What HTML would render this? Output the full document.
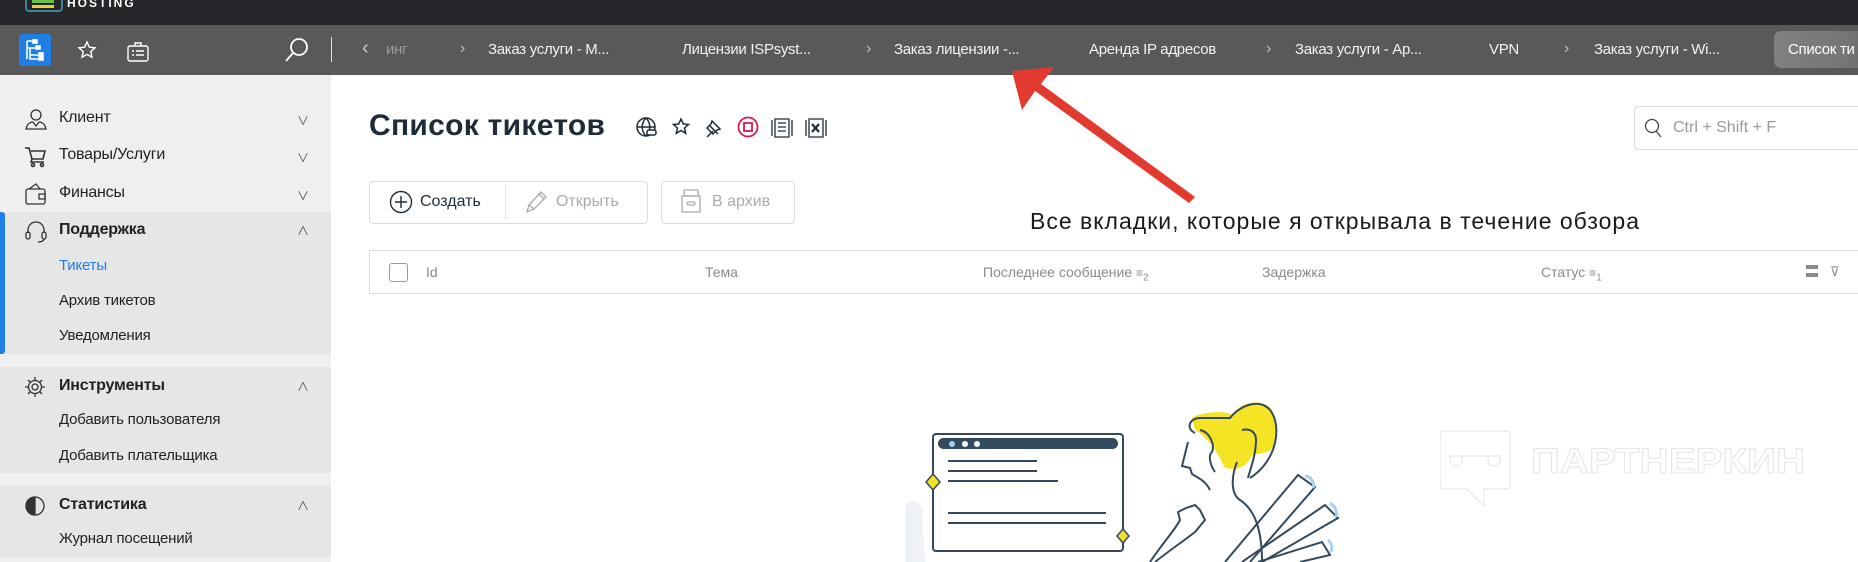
<!DOCTYPE html>
<html><head><meta charset="utf-8"><style>
*{box-sizing:border-box;margin:0;padding:0}
body{width:1858px;height:562px;overflow:hidden;background:#fff;font-family:"Liberation Sans","Noto Sans CJK SC",sans-serif;position:relative;color:#1d2b3a}
.abs{position:absolute}
#top{left:0;top:0;width:1858px;height:25px;background:#26272b}
#tabs{left:0;top:25px;width:1858px;height:50px;background:#595959}
.tab{position:absolute;top:41px;color:#f2f2f2;font-size:15px;white-space:nowrap;letter-spacing:-0.3px}
.chev{position:absolute;top:40px;color:#bdbdbd;font-size:16px}
#side{left:0;top:75px;width:331px;height:487px;background:#efefef}
.grp{position:absolute;left:0;width:331px;background:#e6e6e6}
.si{position:absolute;left:59px;font-size:16px;color:#222;white-space:nowrap;letter-spacing:-0.2px}
.car{position:absolute;left:297px;color:#555;font-size:12px}
.btn{position:absolute;border:1px solid #dcdcdc;border-radius:4px;background:#fff}
.th{position:absolute;top:264px;font-size:14px;color:#8a8a8a;white-space:nowrap}
</style></head><body>
<div id="top" class="abs"></div>
<svg class="abs" style="left:25px;top:0" width="40" height="13"><rect x="1" y="-6" width="36" height="17" rx="3" fill="none" stroke="#4aa4b8" stroke-width="1.5"/><rect x="7" y="-2" width="22" height="5" fill="#6cc04a"/><rect x="7" y="5" width="22" height="3" fill="#e8d23a"/></svg>
<div class="abs" style="left:67px;top:-4px;color:#fff;font-weight:bold;font-size:12px;letter-spacing:2px">HOSTING</div>
<div id="tabs" class="abs"></div>
<div class="abs" style="left:19px;top:34px;width:32px;height:32px;background:#1f7fe5;border-radius:3px"></div>
<svg class="abs" style="left:19px;top:34px" width="32" height="32" fill="none" stroke="#fff" stroke-width="1.6"><path d="M8 7h6M8 7v18M8 14h8M11 14v7h8M11 21v4h8"/><rect x="14" y="6" width="4" height="3" fill="#fff"/><rect x="17" y="12" width="4" height="3" fill="#fff"/><rect x="20" y="19" width="4" height="3" fill="#fff"/><rect x="20" y="23" width="4" height="3" fill="#fff"/></svg>
<svg class="abs" style="left:77px;top:40px" width="20" height="20" fill="none" stroke="#fff" stroke-width="1.4"><path d="M10 2l2.4 5.2 5.6.6-4.2 3.8 1.2 5.6L10 14.4 5 17.2l1.2-5.6L2 7.8l5.6-.6z"/></svg>
<svg class="abs" style="left:127px;top:40px" width="22" height="22" fill="none" stroke="#fff" stroke-width="1.4"><rect x="1" y="6" width="20" height="15" rx="2"/><path d="M8 6V3h6v3M5 11h2M9 11h8M5 15h2M9 15h8"/></svg>
<svg class="abs" style="left:284px;top:37px" width="26" height="26" fill="none" stroke="#fff" stroke-width="1.8"><circle cx="15" cy="10" r="8"/><path d="M9 16L2 24"/></svg>
<div class="abs" style="left:331px;top:37px;width:1px;height:25px;background:#ddd"></div>
<div class="chev" style="left:362px;color:#ccc;font-size:20px;top:37px">‹</div>
<div class="tab" style="left:386px;color:#9a9a9a">инг</div>
<div class="chev" style="left:460px">›</div>
<div class="tab" style="left:488px">Заказ услуги - М...</div>
<div class="tab" style="left:682px">Лицензии ISPsyst...</div>
<div class="chev" style="left:866px">›</div>
<div class="tab" style="left:894px">Заказ лицензии -...</div>
<div class="tab" style="left:1089px">Аренда IP адресов</div>
<div class="chev" style="left:1266px">›</div>
<div class="tab" style="left:1295px">Заказ услуги - Ар...</div>
<div class="tab" style="left:1489px">VPN</div>
<div class="chev" style="left:1564px">›</div>
<div class="tab" style="left:1594px">Заказ услуги - Wi...</div>
<div class="abs" style="left:1774px;top:31px;width:100px;height:37px;border-radius:7px;background:linear-gradient(90deg,#808080,#767676 70%,#6a6a6a)"></div>
<div class="tab" style="left:1788px;color:#fff">Список ти</div>

<div id="side" class="abs"></div>
<div class="grp" style="top:212px;height:142px"></div>
<div class="abs" style="left:0;top:212px;width:5px;height:142px;background:#1f7fe5;border-radius:0 3px 3px 0"></div>
<div class="grp" style="top:367px;height:106px"></div>
<div class="grp" style="top:486px;height:71px"></div>
<svg class="abs" style="left:24px;top:107px" width="24" height="24" fill="none" stroke="#333" stroke-width="1.3"><circle cx="12" cy="8" r="5"/><path d="M2 22c1-5 4-7 7-7l3 4 3-4c3 0 6 2 7 7z"/></svg>
<svg class="abs" style="left:24px;top:145px" width="24" height="24" fill="none" stroke="#333" stroke-width="1.6"><path d="M1 3h4l3 11h11l2-8H7M8 14l-1 3h13"/><circle cx="9" cy="20" r="1.5"/><circle cx="18" cy="20" r="1.5"/></svg>
<svg class="abs" style="left:24px;top:182px" width="24" height="24" fill="none" stroke="#333" stroke-width="1.3"><rect x="2" y="7" width="19" height="15" rx="2"/><path d="M5 7l7-5 4 5M15 12h6v5h-6z"/></svg>
<svg class="abs" style="left:24px;top:219px" width="24" height="24" fill="none" stroke="#333" stroke-width="1.3"><path d="M4 14v-3a8 8 0 0 1 16 0v3"/><rect x="2" y="13" width="4" height="7" rx="2"/><rect x="18" y="13" width="4" height="7" rx="2"/><path d="M20 20c0 2-3 3-6 3"/></svg>
<svg class="abs" style="left:24px;top:376px" width="22" height="22" fill="none" stroke="#333" stroke-width="1.3"><circle cx="11" cy="11" r="3"/><path d="M11 1v3M11 18v3M1 11h3M18 11h3M4 4l2 2M16 16l2 2M4 18l2-2M16 6l2-2"/><circle cx="11" cy="11" r="6.5"/></svg>
<svg class="abs" style="left:24px;top:494px" width="22" height="24" fill="none" stroke="#333" stroke-width="1.3"><circle cx="11" cy="12" r="9"/><path d="M11 3a9 9 0 0 0 0 18z" fill="#333"/></svg>
<div class="si" style="top:109px">Клиент</div><div class="car" style="top:112px">∨</div>
<div class="si" style="top:146px">Товары/Услуги</div><div class="car" style="top:149px">∨</div>
<div class="si" style="top:184px">Финансы</div><div class="car" style="top:187px">∨</div>
<div class="si" style="top:221px;font-weight:bold">Поддержка</div><div class="car" style="top:222px">∧</div>
<div class="si" style="top:257px;color:#1f7fe5;font-size:15px">Тикеты</div>
<div class="si" style="top:292px;font-size:15px">Архив тикетов</div>
<div class="si" style="top:327px;font-size:15px">Уведомления</div>
<div class="si" style="top:377px;font-weight:bold">Инструменты</div><div class="car" style="top:378px">∧</div>
<div class="si" style="top:411px;font-size:15px">Добавить пользователя</div>
<div class="si" style="top:447px;font-size:15px">Добавить плательщика</div>
<div class="si" style="top:496px;font-weight:bold">Статистика</div><div class="car" style="top:497px">∧</div>
<div class="si" style="top:530px;font-size:15px">Журнал посещений</div>

<div class="abs" style="left:369px;top:109px;font-size:30px;font-weight:bold;color:#1d2b3a;letter-spacing:0.3px">Список тикетов</div>
<svg class="abs" style="left:635px;top:116px" width="200" height="24" fill="none" stroke="#1d2b3a" stroke-width="1.5">
<circle cx="11" cy="11" r="9"/><path d="M2 11h18M11 2c-5 5-5 13 0 18M11 2c5 5 5 13 0 18"/><rect x="12" y="14" width="9" height="5" rx="2" fill="#fff"/>
<path d="M46 3l2.3 5 5.2.5-4 3.6 1.2 5.2-4.7-2.8-4.7 2.8 1.2-5.2-4-3.6 5.2-.5z"/>
<path d="M72 21l6-6M75 10l8 8M77 5l8 8-3 1-4 4-6-6 4-4z"/>
<circle cx="113" cy="11" r="9.5" stroke="#d81b50" stroke-width="1.8"/><rect x="109" y="7" width="8" height="8" stroke="#d81b50" stroke-width="1.8"/>
<path d="M140 3h14v18h-14zM137 4v16M157 4v16M143 7h8M143 11h8M143 15h8" stroke-width="1.3"/>
<path d="M174 3h14v18h-14zM171 4v16M191 4v16" stroke-width="1.3"/><path d="M177 8l7 8M184 8l-7 8" stroke-width="2.2"/>
</svg>
<div class="abs" style="left:1634px;top:106px;width:240px;height:44px;border:1px solid #ddd;border-radius:4px"></div>
<svg class="abs" style="left:1643px;top:117px" width="20" height="22" fill="none" stroke="#444" stroke-width="1.3"><circle cx="9" cy="9" r="6.5"/><path d="M13 14l5 6"/></svg>
<div class="abs" style="left:1673px;top:119px;font-size:16px;color:#999">Ctrl + Shift + F</div>

<div class="btn" style="left:369px;top:181px;width:279px;height:43px"></div>
<div class="abs" style="left:505px;top:185px;width:1px;height:35px;background:#e2e2e2"></div>
<svg class="abs" style="left:389px;top:190px" width="24" height="24" fill="none" stroke="#1d2b3a" stroke-width="1.4"><circle cx="12" cy="12" r="10.5"/><path d="M12 6v12M6 12h12"/></svg>
<div class="abs" style="left:420px;top:193px;font-size:16px;color:#1d2b3a">Создать</div>
<svg class="abs" style="left:524px;top:189px" width="24" height="26" fill="none" stroke="#aaa" stroke-width="1.3"><path d="M3 23l2-7L17 3l5 5L10 20zM5 16l5 4M15 5l5 5"/></svg>
<div class="abs" style="left:556px;top:193px;font-size:16px;color:#aaa">Открыть</div>
<div class="btn" style="left:661px;top:181px;width:134px;height:43px"></div>
<svg class="abs" style="left:680px;top:189px" width="22" height="26" fill="none" stroke="#aaa" stroke-width="1.3"><rect x="4" y="1" width="14" height="6" rx="1"/><path d="M2 7h18v16H2z"/><rect x="7" y="13" width="8" height="3" rx="1.5"/></svg>
<div class="abs" style="left:712px;top:193px;font-size:16px;color:#aaa">В архив</div>

<div class="abs" style="left:369px;top:250px;width:1500px;height:44px;border:1px solid #dcdcdc;border-right:none"></div>
<div class="abs" style="left:389px;top:263px;width:19px;height:19px;border:1.5px solid #999;border-radius:3px"></div>
<div class="th" style="left:426px">Id</div>
<div class="th" style="left:705px">Тема</div>
<div class="th" style="left:983px">Последнее сообщение <span style="font-size:12px">≡<sub>2</sub></span></div>
<div class="th" style="left:1262px">Задержка</div>
<div class="th" style="left:1541px">Статус <span style="font-size:12px">≡<sub>1</sub></span></div>
<div class="abs" style="left:1806px;top:265px;width:12px;height:4px;background:#888"></div>
<div class="abs" style="left:1806px;top:273px;width:12px;height:4px;background:#888"></div>
<div class="th" style="left:1830px;font-size:13px">⊽</div>

<div class="abs" style="left:1030px;top:208px;font-size:23px;letter-spacing:1px;color:#1a1a1a;white-space:nowrap">Все вкладки, которые я открывала в течение обзора</div>
<svg class="abs" style="left:0;top:0" width="1858" height="562">
<path d="M1012 71 L1054 67 L1041 84 L1195 197 L1189 203 L1035 91 L1022 110 Z" fill="#e23a2e"/>
</svg>

<svg class="abs" style="left:0;top:0" width="1858" height="562" fill="none">
<path d="M905 562V510c0-12 15-12 17 0l3 52z" fill="#eef2f7"/>
<rect x="933" y="434" width="190" height="117" rx="3" stroke="#334a5e" stroke-width="2"/>
<rect x="938" y="438" width="180" height="11" rx="5.5" fill="#334a5e"/>
<circle cx="952" cy="444" r="3" fill="#a8d0f0"/><circle cx="965" cy="444" r="3" fill="#fff"/><circle cx="977" cy="444" r="3" fill="#fff"/>
<path d="M948 461h89M948 471h89M948 481h110M948 513h158M948 523h158" stroke="#334a5e" stroke-width="2"/>
<path d="M933 474l7 8-7 8-7-8z" fill="#f4e12a" stroke="#334a5e" stroke-width="1.5"/>
<path d="M1123 529l6 7-6 7-6-7z" fill="#f4e12a" stroke="#334a5e" stroke-width="1.5"/>
<path d="M1192 418C1200 412 1225 410 1232 415C1240 402 1262 397 1272 410C1280 425 1278 445 1268 452L1252 455C1245 470 1235 470 1225 468C1218 455 1212 440 1195 430Z" fill="#f5e423"/>
<g stroke="#334a5e" stroke-width="2">
<path d="M1195 433C1185 428 1190 418 1200 418L1230 418C1240 405 1260 398 1270 410C1282 425 1278 460 1250 478"/>
<path d="M1242 430C1250 428 1256 432 1256 440C1256 455 1250 470 1248 478"/>
<path d="M1200 430C1210 432 1215 445 1212 452C1208 455 1210 465 1215 472"/>
<path d="M1188 442L1182 466L1190 468L1192 474C1198 478 1205 480 1210 490"/>
<path d="M1237 462C1230 480 1232 495 1240 500C1255 510 1262 530 1262 562"/>
<path d="M1150 562C1165 540 1175 530 1180 520L1178 512L1186 508L1195 505L1200 510L1205 520L1195 532C1185 540 1170 550 1155 562"/>
<path d="M1225 562L1298 475L1315 487L1250 562M1242 562L1325 505L1338 518L1262 562M1258 562L1322 542L1330 555L1300 562"/>
</g>
<path d="M1305 476c5 0 10 6 8 12M1330 503c4 2 8 8 6 14M1328 540c3 2 5 8 3 12" stroke="#a8d0f0" stroke-width="3"/>
</svg>

<svg class="abs" style="left:1440px;top:430px" width="372" height="80" fill="none" stroke="#e8e8e8" stroke-width="1.2">
<path d="M4 1h62a4 4 0 0 1 4 4v50a4 4 0 0 1-4 4H44v17l-17-17H4a4 4 0 0 1-4-4V5a4 4 0 0 1 4-4z"/>
<path d="M10 26h50v4a6 6 0 0 1-12 0v-4M10 26v4a6 6 0 0 0 12 0v-4"/>
<text x="91" y="43" font-family="Liberation Sans" font-weight="bold" font-size="35" stroke="#e6e6e6" stroke-width="1" fill="#fff" textLength="274" lengthAdjust="spacingAndGlyphs">ПАРТНЕРКИН</text>
</svg>
</body></html>
